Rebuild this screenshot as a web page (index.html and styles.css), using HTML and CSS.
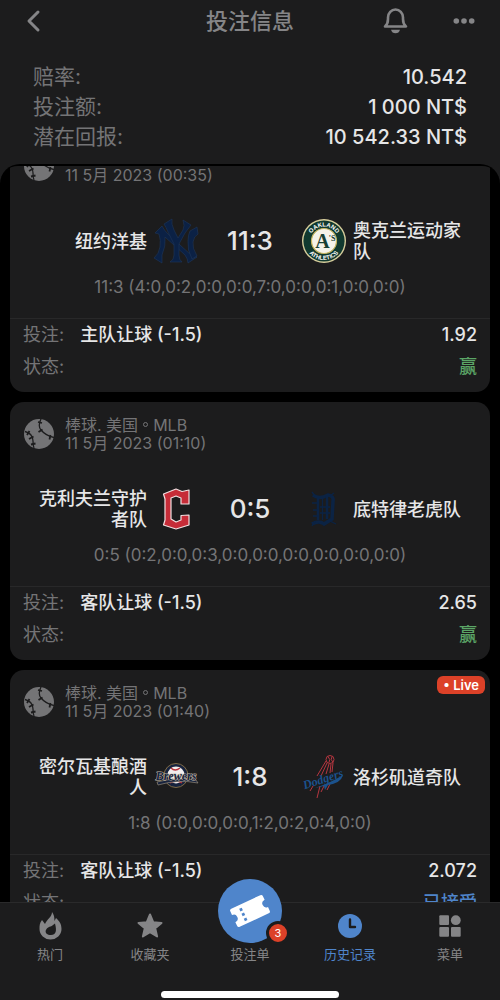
FILE: index.html
```html
<!DOCTYPE html>
<html lang="zh-Hans">
<head>
<meta charset="utf-8">
<meta name="viewport" content="width=device-width, initial-scale=1">
<title>投注信息</title>
<link rel="stylesheet" href="styles.css">
</head>
<body>
<svg class="sprite" aria-hidden="true">
  <symbol id="ball" viewBox="0 0 30 30">
    <circle cx="15" cy="15" r="15" fill="#747476"/>
    <g fill="none" stroke="#1c1c1d" stroke-linecap="butt">
      <path stroke-width="1.300" d="M17 0C15 4 14.500 8 17 11S23 17 30 18.500M1 12.500C7 14 9 18 9 22S9 27 10 29"/>
      <path stroke-width="1.800" d="M14 3 18 4M14.500 13 18.500 10.500M25.500 20.500 26.500 16M3 16 5.500 12M5 20 9.500 17.500M7 25.500 11.500 24.500"/>
    </g>
  </symbol>
</svg>

<header class="topbar">
  <button class="icon-button" type="button" aria-label="返回">
    <svg width="24" height="24" viewBox="0 0 24 24"><path d="M14 3 5 12l9 9" fill="none" stroke="#858587" stroke-width="3" stroke-linecap="round" stroke-linejoin="round"/></svg>
  </button>
  <h1 class="title">投注信息</h1>
  <div class="actions">
    <button class="icon-button" type="button" aria-label="通知">
      <svg width="26" height="26" viewBox="0 0 26 26" fill="none" stroke="#858587"><path d="M6 11V9.500a7.500 8 0 0 1 15 0V11c0 4 .5 5.500 3 7.500H3c2.500-2 3-3.500 3-7.500Z" stroke-width="2.600" stroke-linejoin="round"/><path d="M9 21.800h9q-1 3.500-4.500 3.500T9 21.800Z" fill="#858587" stroke="none"/></svg>
    </button>
    <button class="icon-button" type="button" aria-label="更多">
      <svg width="24" height="24" viewBox="0 0 24 24" fill="#858587"><circle cx="4.300" cy="12" r="2.800"/><circle cx="12" cy="12" r="2.800"/><circle cx="19.700" cy="12" r="2.800"/></svg>
    </button>
  </div>
</header>

<dl class="summary">
  <div class="summary-row"><dt>赔率:</dt><dd>10.542</dd></div>
  <div class="summary-row"><dt>投注额:</dt><dd>1 000 NT$</dd></div>
  <div class="summary-row"><dt>潜在回报:</dt><dd>10 542.33 NT$</dd></div>
</dl>

<main class="bets">
  <div class="bet-list">
    <article class="card scrolled">
      <div class="event">
        <svg class="ball"><use href="#ball"/></svg>
        <div>棒球. 美国 <i class="dot"></i> MLB<br>11 5月 2023 (00:35)</div>
      </div>
      <div class="match">
        <div class="team home">纽约洋基</div>
        <svg class="logo" viewBox="0 0 44 44" role="img" aria-label="New York Yankees">
          <g fill="#0b2145" stroke="#20375a" stroke-width=".6" stroke-linejoin="round">
            <path d="M1 14 8 7Q10 11 14 15L37 36 43 38 34 44Q34 40 31 36L11 18Q12 27 8 36L8 44 0 39Q5 35 6 28T5 15Z"/>
            <path d="M36 12 43 8 44 15Q40 17 39 23T43 37L38 40Q33 31 34 22Q34 16 36 12Z"/>
            <path d="M10 5 18 0Q17 5 20 11L24 19 29 11Q31 7 29 1L37 6Q34 10 31 14L25 25V36Q25 41 28 43H16Q20 41 20 36V25L14 13Q12 8 10 5Z"/>
          </g>
        </svg>
        <div class="score">11:3</div>
        <svg class="logo" viewBox="0 0 44 44" role="img" aria-label="Oakland Athletics">
          <defs><path id="arcTop" d="M7.500 22a14.500 14.500 0 0 1 29 0"/><path id="arcLow" d="M3 22a19 19 0 0 0 38 0"/></defs>
          <circle cx="22" cy="22" r="22" fill="#d8cf9d"/><circle cx="22" cy="22" r="20.600" fill="#11392f"/>
          <circle cx="22" cy="22" r="12.500" fill="#f5f2e9" stroke="#c7b55e" stroke-width="1.200"/>
          <g class="ring-text"><text><textPath href="#arcTop" startOffset="50%">OAKLAND</textPath></text><text><textPath href="#arcLow" startOffset="50%">ATHLETICS</textPath></text></g>
          <text class="mono-a" x="20.500" y="29">A</text><text class="mono-s" x="30" y="22">'S</text>
        </svg>
        <div class="team">奥克兰运动家队</div>
      </div>
      <p class="periods">11:3 (4:0,0:2,0:0,0:0,7:0,0:0,0:1,0:0,0:0)</p>
      <dl class="result">
        <dt>投注:</dt><dd class="pick">主队让球 (-1.5)</dd><dd>1.92</dd>
        <dt>状态:</dt><dd class="state won">赢</dd>
      </dl>
    </article>

    <article class="card">
      <div class="event">
        <svg class="ball"><use href="#ball"/></svg>
        <div>棒球. 美国 <i class="dot"></i> MLB<br>11 5月 2023 (01:10)</div>
      </div>
      <div class="match">
        <div class="team home">克利夫兰守护者队</div>
        <svg class="logo" viewBox="0 0 44 44" role="img" aria-label="Cleveland Guardians">
          <path d="M9.500 7 22 2 28 4.500 35 3V17H27V11L22 9 17 11V32L22 35 27 33V28.500L35 28V38L22 42 9.500 38 11 33V12Z" fill="#c62c38" stroke="#f2dfe1" stroke-width="1.200" stroke-linejoin="round"/>
        </svg>
        <div class="score">0:5</div>
        <svg class="logo" viewBox="0 0 44 44" role="img" aria-label="Detroit Tigers">
          <g fill="none" stroke="#0b2344">
            <path stroke-width="3.500" d="M11 8Q17 13 26 8Q32 9 31 14L30 32 22 37Q17 33 10 37"/>
            <path stroke-width="2.500" d="M16 11V33M25 9V32"/>
            <path stroke-width="1.300" d="M20.500 12V33M10 16H16M11 23H16M11 29H17M18 20H28M18 26H28M13 9 10 5M28 34l6 3M28 9l4-3M13 34l-3 5"/>
          </g>
        </svg>
        <div class="team">底特律老虎队</div>
      </div>
      <p class="periods">0:5 (0:2,0:0,0:3,0:0,0:0,0:0,0:0,0:0,0:0)</p>
      <dl class="result">
        <dt>投注:</dt><dd class="pick">客队让球 (-1.5)</dd><dd>2.65</dd>
        <dt>状态:</dt><dd class="state won">赢</dd>
      </dl>
    </article>

    <article class="card">
      <span class="live">• Live</span>
      <div class="event">
        <svg class="ball"><use href="#ball"/></svg>
        <div>棒球. 美国 <i class="dot"></i> MLB<br>11 5月 2023 (01:40)</div>
      </div>
      <div class="match">
        <div class="team home">密尔瓦基酿酒人</div>
        <svg class="logo" viewBox="0 0 44 44" role="img" aria-label="Milwaukee Brewers">
          <circle cx="22" cy="20.500" r="12" fill="#17233e" stroke="#806b45" stroke-width="1"/>
          <circle cx="22" cy="20" r="8.500" fill="#f2eeee"/>
          <path d="M17 13q4 4 9 0M16 28q6-4 12 0" fill="none" stroke="#b8323b" stroke-width="1.300"/>
          <path d="M3 27Q22 22 42 25L44 28Q24 24 4 30Z" fill="#17233e" stroke="#a79b83" stroke-width=".6"/>
          <text class="brewers" x="22" y="25">Brewers</text>
        </svg>
        <div class="score">1:8</div>
        <svg class="logo" viewBox="0 0 44 44" role="img" aria-label="Los Angeles Dodgers">
          <g fill="none" stroke="#b43640" stroke-width="1">
            <circle cx="28" cy="4.500" r="4"/><path d="M26 1.500q3 3 1 6M30 1.500q-2 3 1 6M24 6 15 21M25 8 19 21M27 9 24 19M29 9 28 18M31 8 30 17M11 31 8 36M18 31 15 43M22 31 19 37M28 29 25 35"/>
          </g>
          <text class="dodgers" x="21" y="28" transform="rotate(-18 21 24)">Dodgers</text>
          <path d="M13 33Q28 28 41 20Q39 28 26 30L23 35 22 31Z" fill="#1b528d"/>
        </svg>
        <div class="team">洛杉矶道奇队</div>
      </div>
      <p class="periods">1:8 (0:0,0:0,0:0,1:2,0:2,0:4,0:0)</p>
      <dl class="result">
        <dt>投注:</dt><dd class="pick">客队让球 (-1.5)</dd><dd>2.072</dd>
        <dt>状态:</dt><dd class="state accepted">已接受</dd>
      </dl>
    </article>
  </div>
</main>

<nav class="tabbar">
  <div class="tabs">
    <a class="tab" href="#hot">
      <svg width="28" height="28" viewBox="0 0 28 28"><path d="M16 0C16 5 11 7 9 12L6 8C3.500 11 3.500 14 3.500 17A11 10.500 0 0 0 25.500 17C25.500 11 23 9 20 6L18.500 9Q18.500 3 16 0ZM15 23C7 23 9 15.500 14.500 14.500Q16 14 19 11.500C21 19 20 23 15 23Z" fill="#858587" fill-rule="evenodd"/></svg>热门</a>
    <a class="tab" href="#favourites">
      <svg width="28" height="28" viewBox="0 0 28 28"><path d="M14 2.500 17.200 10.200 25.500 10.900 19.200 16.300 21.100 24.500 14 20.100 6.900 24.500 8.800 16.300 2.500 10.900 10.800 10.200Z" fill="#858587" stroke="#858587" stroke-width="2" stroke-linejoin="round"/></svg>收藏夹</a>
    <a class="tab" href="#slip">
      <span class="slip">
        <svg width="44" height="44" viewBox="0 0 44 44"><g transform="rotate(-25 22 22)"><path d="M6 12H38Q40 12 40 14V18A4 4 0 0 0 40 26V30Q40 32 38 32H6Q4 32 4 30V26A4 4 0 0 0 4 18V14Q4 12 6 12Z" fill="#fff"/><path d="M14.500 15.500V30" stroke="#4f85cb" stroke-width="2.800" stroke-dasharray="2.800 2.600"/></g></svg>
        <span class="count">3</span>
      </span>投注单</a>
    <a class="tab active" href="#history" aria-current="page">
      <svg width="28" height="28" viewBox="0 0 28 28"><circle cx="14" cy="14" r="12" fill="#4f85cb"/><path d="M14 7.500V15H19" fill="none" stroke="#1c1c1d" stroke-width="2.400" stroke-linecap="round" stroke-linejoin="round"/></svg>历史记录</a>
    <a class="tab" href="#menu">
      <svg width="28" height="28" viewBox="0 0 28 28" fill="#858587"><rect x="3.300" y="3.300" width="9.700" height="9.700" rx="1"/><circle cx="19.800" cy="8.200" r="4.900"/><rect x="3.300" y="15" width="9.700" height="9.700" rx="1"/><rect x="15" y="15" width="9.700" height="9.700" rx="1"/></svg>菜单</a>
  </div>
  <div class="home-indicator"></div>
</nav>
</body>
</html>
```
FILE: styles.css
```css
* { box-sizing: border-box; }

body {
  margin: 0;
  height: 100vh;
  display: flex;
  flex-direction: column;
  overflow: hidden;
  background: #1c1c1d;
  color: #e6e6e7;
  font-family: Inter, "Noto Sans CJK SC", sans-serif;
  font-size: 18px;
}

.sprite { display: none; }
dl, dd, p, h1 { margin: 0; }
svg { display: block; overflow: visible; }

.topbar {
  display: grid;
  grid-template-columns: 1fr auto 1fr;
  align-items: center;
  height: 42px;
  padding: 0 24px;
}

.icon-button {
  display: block;
  padding: 0;
  border: 0;
  background: none;
  cursor: pointer;
}

.title {
  color: #858587;
  font-size: 22px;
  font-weight: 500;
  line-height: 32px;
}

.actions {
  display: flex;
  align-items: center;
  justify-content: flex-end;
  gap: 44px;
}

.summary { padding: 20px 33px 12px; }

.summary-row {
  display: flex;
  justify-content: space-between;
  font-size: 20px;
  line-height: 30px;
}

.summary-row dt {
  color: #747476;
  font-size: 21px;
}

.summary-row dd { font-weight: 500; }

.bets {
  flex: 1;
  min-height: 0;
  padding: 2px 0 0;
  overflow: hidden;
  background: #000;
  border-radius: 20px 20px 0 0;
}

.bet-list {
  display: flex;
  flex-direction: column;
  gap: 10px;
  height: 100%;
  padding: 0 10px;
  overflow: hidden;
  border-radius: 18px 18px 0 0;
}

.card {
  position: relative;
  flex: none;
  padding-bottom: 9px;
  background: #1c1c1d;
  border-radius: 14px;
}

/* The list opens part-way down its first card. */
.card.scrolled { margin-top: -32px; }

.event {
  display: flex;
  align-items: center;
  gap: 11px;
  padding: 14px 14px 0;
  color: #747476;
  font-size: 16px;
  line-height: 18px;
}

.ball { width: 30px; height: 30px; }

.dot {
  display: inline-block;
  width: 5px;
  height: 5px;
  margin: 0 1px 4px 0;
  border: 1px solid #747476;
  border-radius: 50%;
}

.match {
  display: grid;
  grid-template-columns: 1fr 44px 90px 44px 1fr;
  align-items: center;
  gap: 7px;
  min-height: 44px;
  margin-top: 35px;
  padding: 0 28px;
}

.team { font-weight: 500; line-height: 21px; }
.team.home { text-align: right; }

.logo { width: 44px; height: 44px; }

.score {
  font-size: 26px;
  font-weight: 500;
  line-height: 30px;
  text-align: center;
}

.periods {
  margin-top: 12px;
  color: #747476;
  font-size: 17px;
  line-height: 24px;
  text-align: center;
}

.result {
  display: grid;
  grid-template-columns: auto 1fr auto;
  column-gap: 16px;
  margin-top: 19px;
  padding: 0 13px;
  border-top: 1px solid #282829;
  line-height: 32px;
}

.result dt { color: #747476; }
.result dd { font-weight: 500; }
.state { grid-column: 2 / 4; text-align: right; }
.result .won { color: #5ba566; }
.result .accepted { color: #4f85cb; }

.live {
  position: absolute;
  top: 6px;
  right: 5px;
  padding: 0 6px;
  border-radius: 6px;
  background: #dc4128;
  color: #fff;
  font-size: 13px;
  font-weight: 600;
  line-height: 18px;
}

.tabbar {
  position: relative;
  height: 98px;
  padding-top: 8px;
  border-top: 1px solid #2a2a2b;
  background: #1c1c1d;
}

.tabs {
  display: grid;
  grid-template-columns: repeat(5, 1fr);
}

.tab {
  position: relative;
  display: flex;
  flex-direction: column;
  align-items: center;
  justify-content: flex-end;
  gap: 5px;
  height: 52px;
  color: #858587;
  font-size: 13px;
  line-height: 18px;
  text-decoration: none;
}

.tab.active { color: #4f85cb; }

.slip {
  position: absolute;
  bottom: 20px;
  display: grid;
  place-items: center;
  width: 64px;
  height: 64px;
  border-radius: 50%;
  background: #4f85cb;
}

.count {
  position: absolute;
  right: -8px;
  bottom: -2px;
  width: 24px;
  height: 24px;
  border: 3px solid #1c1c1d;
  border-radius: 50%;
  background: #dc4128;
  color: #fff;
  font-size: 11px;
  line-height: 18px;
  text-align: center;
}

.home-indicator {
  position: absolute;
  bottom: 2px;
  left: 50%;
  width: 178px;
  height: 7px;
  border-radius: 4px;
  background: #fff;
  transform: translateX(-50%);
}

.ring-text {
  fill: #fff;
  font: 700 6px "Liberation Sans", sans-serif;
  text-anchor: middle;
}

.mono-a, .mono-s {
  fill: #193f33;
  font: 700 20px "Liberation Serif", serif;
  text-anchor: middle;
}

.mono-s { font-size: 8px; }

.brewers, .dodgers {
  font: italic 700 12px "Liberation Serif", serif;
  text-anchor: middle;
}

.brewers {
  fill: #17233e;
  stroke: #c3bba9;
  stroke-width: 1px;
  paint-order: stroke;
}

.dodgers { fill: #1b528d; }
```
